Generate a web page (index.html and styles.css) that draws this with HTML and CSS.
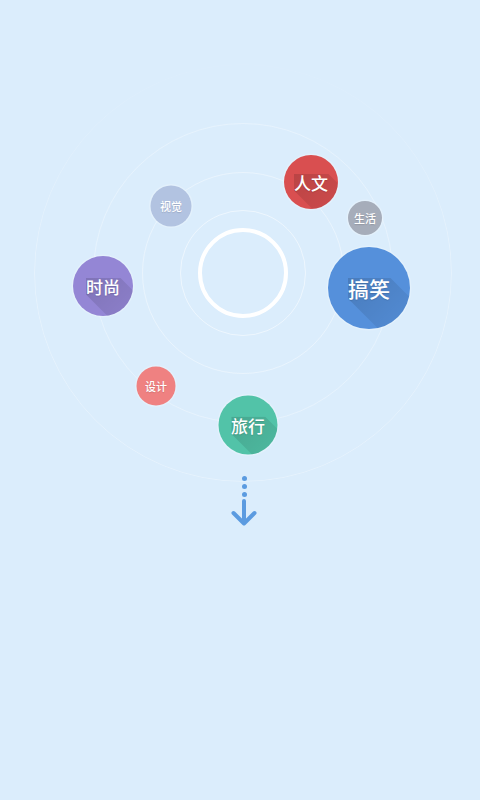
FILE: index.html
```html
<!DOCTYPE html>
<html lang="zh-CN">
<head>
<meta charset="utf-8">
<title>Tags</title>
<link rel="stylesheet" href="styles.css">
</head>
<body>
<div class="screen">
  <div class="orbit">
    <div class="ring ring-4"></div>
    <div class="ring ring-3"></div>
    <div class="ring ring-2"></div>
    <div class="ring ring-1"></div>
    <div class="ring core"></div>

    <div class="bubble b-renwen lg"><span class="label">人文</span></div>
    <div class="bubble b-shenghuo sm"><span class="label">生活</span></div>
    <div class="bubble b-gaoxiao xl"><span class="label">搞笑</span></div>
    <div class="bubble b-shijue sm"><span class="label">视觉</span></div>
    <div class="bubble b-shishang lg"><span class="label">时尚</span></div>
    <div class="bubble b-sheji sm"><span class="label">设计</span></div>
    <div class="bubble b-lvxing lg"><span class="label">旅行</span></div>
  </div>

  <div class="scroll-hint">
    <span class="dot"></span>
    <span class="dot"></span>
    <span class="dot"></span>
    <svg class="arrow" width="28" height="28" viewBox="0 0 28 28">
      <path d="M14 2 V24 M3.5 14 L14 24.5 L24.5 14" fill="none" stroke="#5b9be0" stroke-width="4" stroke-linecap="round" stroke-linejoin="round"/>
    </svg>
  </div>
</div>
</body>
</html>
```

FILE: styles.css
```css
* { box-sizing: border-box; }
html, body {
  margin: 0;
  padding: 0;
  background: #dbedfc;
}
.screen {
  width: 480px;
  height: 800px;
  position: relative;
  overflow: hidden;
  background: #dbedfc;
  font-family: "Noto Sans CJK SC", "Noto Sans", sans-serif;
}
.orbit {
  position: relative;
  width: 480px;
  height: 470px;
}
.ring {
  position: absolute;
  border-radius: 50%;
  left: 243px;
  top: 273px;
  transform: translate(-50%, -50%);
}
.core {
  width: 90px;
  height: 90px;
  border: 4px solid #ffffff;
}
.ring-1 {
  width: 126px;
  height: 126px;
  border: 1.5px solid rgba(255,255,255,0.5);
}
.ring-2 {
  width: 202px;
  height: 202px;
  border: 1.5px solid rgba(255,255,255,0.4);
}
.ring-3 {
  width: 300px;
  height: 300px;
  border: 1.5px solid rgba(255,255,255,0.32);
}
.ring-4 {
  width: 418px;
  height: 418px;
  border: 1.5px solid rgba(255,255,255,0.3);
  -webkit-mask-image: linear-gradient(to bottom, rgba(0,0,0,0.15) 0%, #000 45%, #000 100%);
  mask-image: linear-gradient(to bottom, rgba(0,0,0,0.15) 0%, #000 45%, #000 100%);
}
.bubble {
  position: absolute;
  border-radius: 50%;
  overflow: hidden;
  isolation: isolate;
  display: flex;
  align-items: center;
  justify-content: center;
  color: #ffffff;
  box-shadow: 0 0 0 1.5px rgba(255,255,255,0.22);
  transform: translate(-50%, -50%);
}
.label {
  position: relative;
  display: inline-block;
  line-height: 1;
  font-weight: 500;
  text-shadow: 0 1px 1px rgba(0,0,0,0.12);
}
.label::after {
  content: "";
  position: absolute;
  left: 0;
  top: 0;
  width: calc(100% + 60px);
  height: calc(100% + 60px);
  z-index: -1;
  clip-path: polygon(0 0, calc(100% - 60px) 0, 100% 60px, 100% 100%, 60px 100%, 0 calc(100% - 60px));
  background: linear-gradient(135deg, rgba(0,0,0,0.14) 0%, rgba(0,0,0,0.06) 45%, rgba(0,0,0,0) 75%);
}
.sm .label { font-size: 11px; }
.lg .label { font-size: 17px; }
.xl .label { font-size: 21px; }

.b-renwen   { left: 311px; top: 182px; width: 54px; height: 54px; background: #d94f50; }
.b-shenghuo { left: 365px; top: 218px; width: 34px; height: 34px; background: #a6adba; }
.b-gaoxiao  { left: 369px; top: 288px; width: 82px; height: 82px; background: #5590db; }
.b-shijue   { left: 171px; top: 206px; width: 41px; height: 41px; background: #b2c3e1; }
.b-shishang { left: 103px; top: 286px; width: 60px; height: 60px; background: #9486d5; }
.b-sheji    { left: 156px; top: 386px; width: 39px; height: 39px; background: #ef8181; }
.b-lvxing   { left: 248px; top: 425px; width: 59px; height: 59px; background: #52c3a8; }

.b-shijue .label::after,
.b-shenghuo .label::after,
.b-sheji .label::after { display: none; }

.scroll-hint {
  display: flex;
  flex-direction: column;
  align-items: center;
  gap: 3px;
  width: 480px;
  padding-left: 8px;
  margin-top: 6px;
}
.dot {
  width: 5px;
  height: 5px;
  border-radius: 50%;
  background: #5b9be0;
}
.arrow {
  display: block;
  margin-top: -1px;
}
```
